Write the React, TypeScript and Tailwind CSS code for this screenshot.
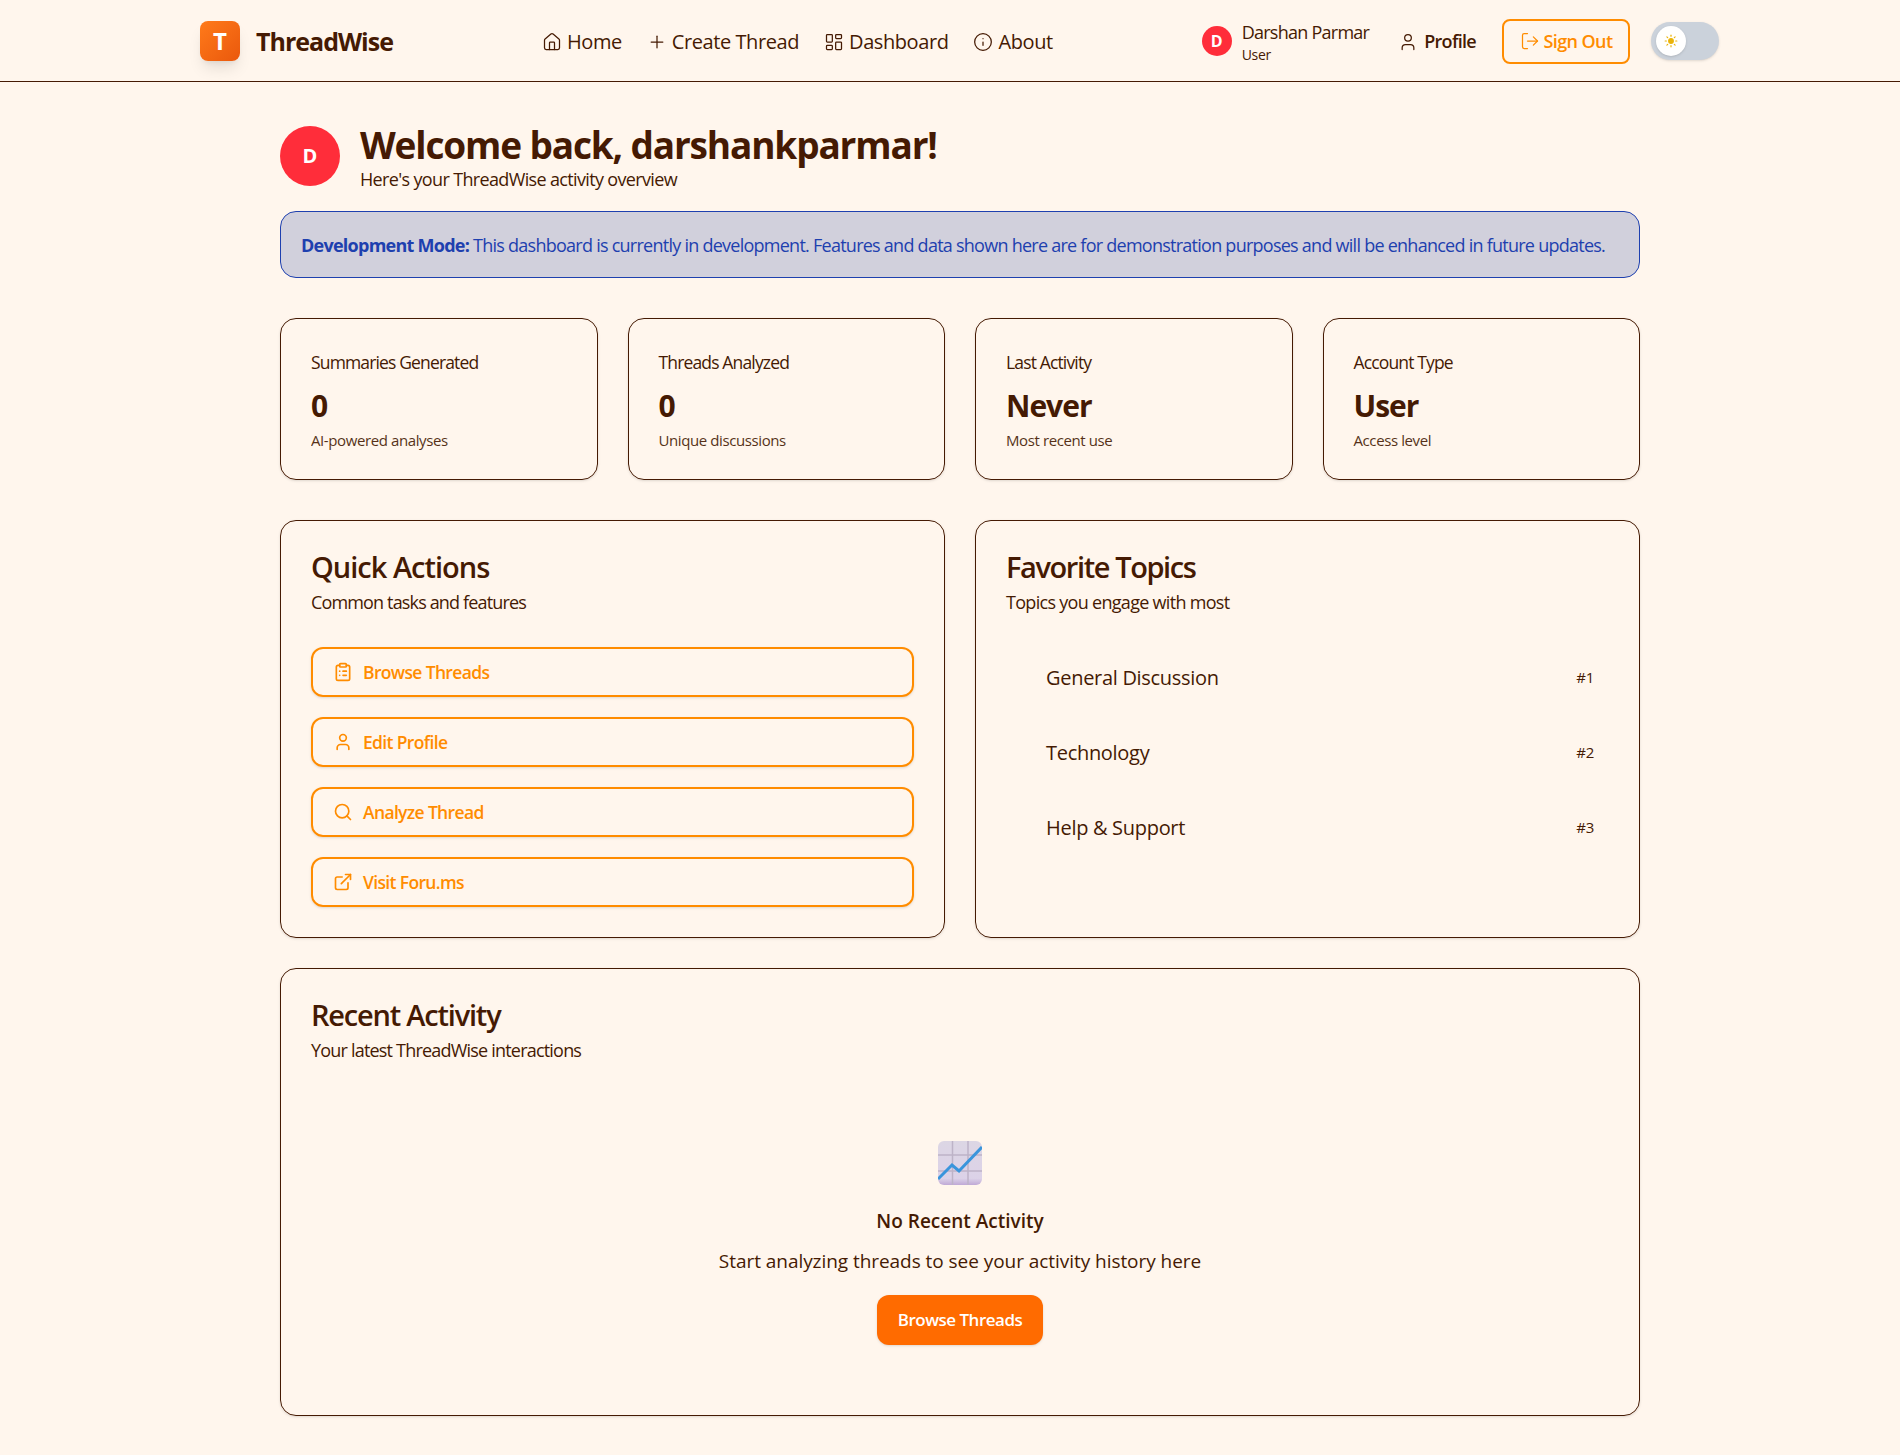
import { ClipboardList, ExternalLink, House, Info, LayoutDashboard, LogOut, Plus, Search, Sun, User } from 'lucide-react';

const stats = [
  { label: 'Summaries Generated', value: '0', note: 'AI-powered analyses' },
  { label: 'Threads Analyzed', value: '0', note: 'Unique discussions' },
  { label: 'Last Activity', value: 'Never', note: 'Most recent use' },
  { label: 'Account Type', value: 'User', note: 'Access level' },
];

const actions = [
  { label: 'Browse Threads', icon: ClipboardList },
  { label: 'Edit Profile', icon: User },
  { label: 'Analyze Thread', icon: Search },
  { label: 'Visit Foru.ms', icon: ExternalLink },
];

const topics = ['General Discussion', 'Technology', 'Help & Support'];

function ChartEmoji() {
  return (
    <svg width="44" height="44" viewBox="0 0 44 44" className="block">
      <defs>
        <linearGradient id="chart-bg" x1="0" y1="0" x2="0" y2="1">
          <stop offset="0" stopColor="#dcd6e4" />
          <stop offset="0.85" stopColor="#dcd2e8" />
          <stop offset="1" stopColor="#bfa9d6" />
        </linearGradient>
      </defs>
      <rect width="44" height="44" rx="6" fill="url(#chart-bg)" />
      <path d="M14.5 0V44M30 0V44M0 14H44M0 30H44" stroke="#bdb3c7" strokeWidth="1.5" />
      <path d="M0 38L14 24L21 30L44 6" fill="none" stroke="#3a95dc" strokeWidth="3" />
    </svg>
  );
}

export default function App() {
  return (
    <div className="min-h-[1455px] bg-[#fff6ed] text-[#451a03] font-['Open_Sans','Noto_Sans',sans-serif] overflow-hidden">
      <header className="h-[82px] border-b border-[#451a03] flex items-center pl-[200px] pr-[181px]">
        <div className="w-10 h-10 rounded-lg bg-gradient-to-br from-[#ff7a1a] to-[#ea580c] shadow-lg flex items-center justify-center text-white font-bold text-2xl">T</div>
        <span className="ml-4 mt-[2px] text-[25px] font-bold tracking-[-1px]">ThreadWise</span>
        <nav className="ml-[149px] mt-[2px] flex items-center gap-[25px] text-[20px] font-medium tracking-[-0.42px]">
          <span className="flex items-center gap-[5px]"><House size={20} strokeWidth={1.5} />Home</span>
          <span className="flex items-center gap-[5px]"><Plus size={20} strokeWidth={1.5} />Create Thread</span>
          <span className="flex items-center gap-[5px]"><LayoutDashboard size={20} strokeWidth={1.5} />Dashboard</span>
          <span className="flex items-center gap-[5px]"><Info size={20} strokeWidth={1.5} />About</span>
        </nav>
        <div className="ml-auto flex items-center">
          <div className="w-[30px] h-[30px] rounded-full bg-[#ff2d3a] text-white text-base font-bold flex items-center justify-center">D</div>
          <div className="ml-[10px] pt-[7px] leading-none">
            <div className="text-[18px] font-medium tracking-[-0.75px]">Darshan Parmar</div>
            <div className="text-sm mt-1 tracking-[-0.3px]">User</div>
          </div>
          <span className="ml-[29px] mt-[2px] flex items-center gap-[6px] text-[18px] font-semibold tracking-[-0.7px]"><User size={20} strokeWidth={1.5} />Profile</span>
          <span className="ml-[26px] h-[45px] w-[128px] mt-px justify-center border-2 border-[#ff8c00] rounded-lg flex items-center gap-[4px] text-[#ff8c00] text-[18px] font-semibold tracking-[-0.6px]"><LogOut size={20} strokeWidth={1.5} />Sign Out</span>
          <span className="ml-[21px] w-[68px] h-[38px] rounded-full bg-[#cbd2db] shadow flex items-center pl-[5px]">
            <span className="w-[30px] h-[30px] rounded-full bg-white shadow flex items-center justify-center text-[#eab308]"><Sun size={14} fill="currentColor" /></span>
          </span>
        </div>
      </header>

      <main className="ml-[280px] w-[1360px]">
        <div className="mt-[40px] flex items-center gap-5">
          <div className="-mt-[2px] w-[60px] h-[60px] rounded-full bg-[#ff2d3a] text-white text-xl font-bold flex items-center justify-center">D</div>
          <div>
            <h1 className="text-[37px] leading-[45px] font-bold tracking-[-1.15px]">Welcome back, darshankparmar!</h1>
            <p className="text-[18px] leading-6 tracking-[-0.65px]">Here's your ThreadWise activity overview</p>
          </div>
        </div>

        <div className="mt-[20px] h-[67px] pt-px rounded-2xl border border-[#1e40af] bg-[#d1d0dc] text-[#1e40af] flex items-center px-[20px] text-[18px] tracking-[-0.745px]">
          <p><strong className="font-bold">Development Mode:</strong> This dashboard is currently in development. Features and data shown here are for demonstration purposes and will be enhanced in future updates.</p>
        </div>

        <section className="mt-[40px] grid grid-cols-4 gap-[30px]">
          {stats.map((s) => (
            <div key={s.label} className="h-[162px] rounded-2xl border border-[#451a03] p-[30px] shadow-sm">
              <div className="mt-px text-[17.5px] leading-6 font-medium tracking-[-0.85px]">{s.label}</div>
              <div className="mt-[12px] text-[30px] leading-10 font-bold tracking-[-1px]">{s.value}</div>
              <div className="mt-1 text-[15px] leading-5 tracking-[-0.4px] opacity-90">{s.note}</div>
            </div>
          ))}
        </section>

        <section className="mt-[40px] grid grid-cols-2 gap-[30px]">
          <div className="h-[418px] rounded-2xl border border-[#451a03] p-[30px] shadow-sm">
            <h2 className="text-[29px] leading-[31px] font-semibold tracking-[-1px]">Quick Actions</h2>
            <p className="mt-2 text-[18px] leading-6 tracking-[-0.85px]">Common tasks and features</p>
            <div className="mt-[33px] flex flex-col gap-[20px]">
              {actions.map((a) => (
                <div key={a.label} className="h-[50px] rounded-xl border-2 border-[#ff8c00] text-[#ff8c00] flex items-center pl-5 shadow-sm">
                  <a.icon size={20} strokeWidth={2} />
                  <span className="ml-[10px] text-[17.5px] font-semibold tracking-[-0.65px]">{a.label}</span>
                </div>
              ))}
            </div>
          </div>
          <div className="h-[418px] rounded-2xl border border-[#451a03] p-[30px] shadow-sm">
            <h2 className="text-[29px] leading-[31px] font-semibold tracking-[-1.4px]">Favorite Topics</h2>
            <p className="mt-2 text-[18px] leading-6 tracking-[-0.7px]">Topics you engage with most</p>
            <div className="mt-[26px] flex flex-col">
              {topics.map((t, i) => (
                <div key={t} className="h-[75px] flex items-center justify-between pl-10 pr-[15px]">
                  <span className="text-[20px] font-medium tracking-[-0.3px]">{t}</span>
                  <span className="text-[15px] tracking-[-0.3px]">#{i + 1}</span>
                </div>
              ))}
            </div>
          </div>
        </section>

        <section className="mt-[30px] mb-[39px] h-[448px] rounded-2xl border border-[#451a03] p-[30px] shadow-sm">
          <h2 className="text-[29px] leading-[31px] font-semibold tracking-[-1.2px]">Recent Activity</h2>
          <p className="mt-2 text-[18px] leading-6 tracking-[-0.8px]">Your latest ThreadWise interactions</p>
          <div className="mt-[79px] flex flex-col items-center">
            <ChartEmoji />
            <h3 className="mt-[22px] text-[19px] leading-7 font-semibold">No Recent Activity</h3>
            <p className="mt-[12px] text-[19px] leading-7 tracking-[-0.05px]">Start analyzing threads to see your activity history here</p>
            <button className="mt-[20px] h-[50px] w-[166px] rounded-xl bg-[#ff6b00] text-white text-[17px] font-semibold shadow-sm tracking-[-0.5px]">Browse Threads</button>
          </div>
        </section>
      </main>
    </div>
  );
}
